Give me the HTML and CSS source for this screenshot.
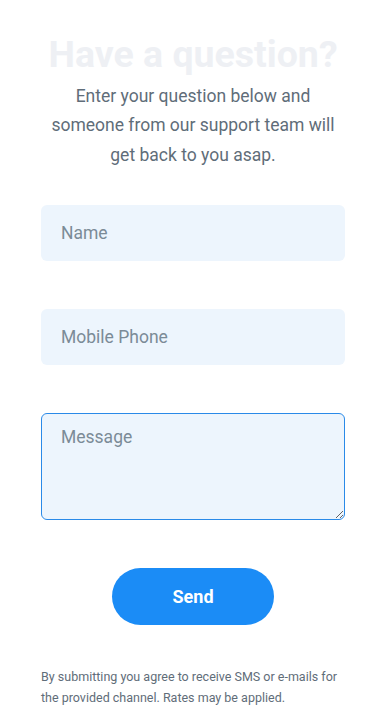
FILE: index.html
```html
<!DOCTYPE html>
<html lang="en">
<head>
<meta charset="utf-8">
<title>Have a question?</title>
<link rel="stylesheet" href="styles.css">
</head>
<body>
<main class="page">
  <h1 class="title">Have a question?</h1>
  <p class="lead">Enter your question below and someone from our support team will get back to you asap.</p>
  <form class="form">
    <input class="field" type="text" placeholder="Name">
    <input class="field" type="tel" placeholder="Mobile Phone">
    <textarea class="field area" placeholder="Message" autofocus></textarea>
    <div class="actions"><button class="send" type="button">Send</button></div>
  </form>
  <p class="note">By submitting you agree to receive SMS or e-mails for the provided channel. Rates may be applied.</p>
</main>
</body>
</html>
```
FILE: styles.css
```css
html, body {
  margin: 0;
  padding: 0;
  background: #ffffff;
}
body {
  font-family: Roboto, "Liberation Sans", sans-serif;
}
.page {
  width: 304px;
  margin: 0 0 0 41px;
  padding-top: 31px;
}
.title {
  margin: 0;
  text-align: center;
  font-size: 37.5px;
  line-height: 46px;
  font-weight: 700;
  color: #eef0f4;
}
.lead {
  margin: 4.5px 0 0;
  text-align: center;
  font-size: 17.5px;
  line-height: 29.5px;
  color: #5f6d79;
}
.form {
  display: flex;
  flex-direction: column;
  gap: 48px;
  margin-top: 34.5px;
}
.field {
  display: block;
  box-sizing: border-box;
  width: 100%;
  height: 56px;
  margin: 0;
  padding: 0 19px;
  border: 1px solid transparent;
  border-radius: 6px;
  background: #edf5fd;
  font-family: Roboto, "Liberation Sans", sans-serif;
  font-size: 17.5px;
  color: #3f4d59;
  outline: none;
}
.field::placeholder {
  color: #7b8b97;
  opacity: 1;
}
.area {
  height: 107px;
  padding: 11px 19px;
  line-height: 24px;
  border-color: #2a8ae8;
  resize: vertical;
}
.actions {
  display: flex;
  justify-content: center;
}
.send {
  width: 162px;
  height: 57px;
  border: none;
  border-radius: 29px;
  background: #1b8cf6;
  color: #ffffff;
  font-family: Roboto, "Liberation Sans", sans-serif;
  font-size: 18px;
  font-weight: 700;
  cursor: pointer;
}
.note {
  margin: 41px 0 0;
  font-size: 12.5px;
  line-height: 21px;
  color: #5f6d79;
}
```
